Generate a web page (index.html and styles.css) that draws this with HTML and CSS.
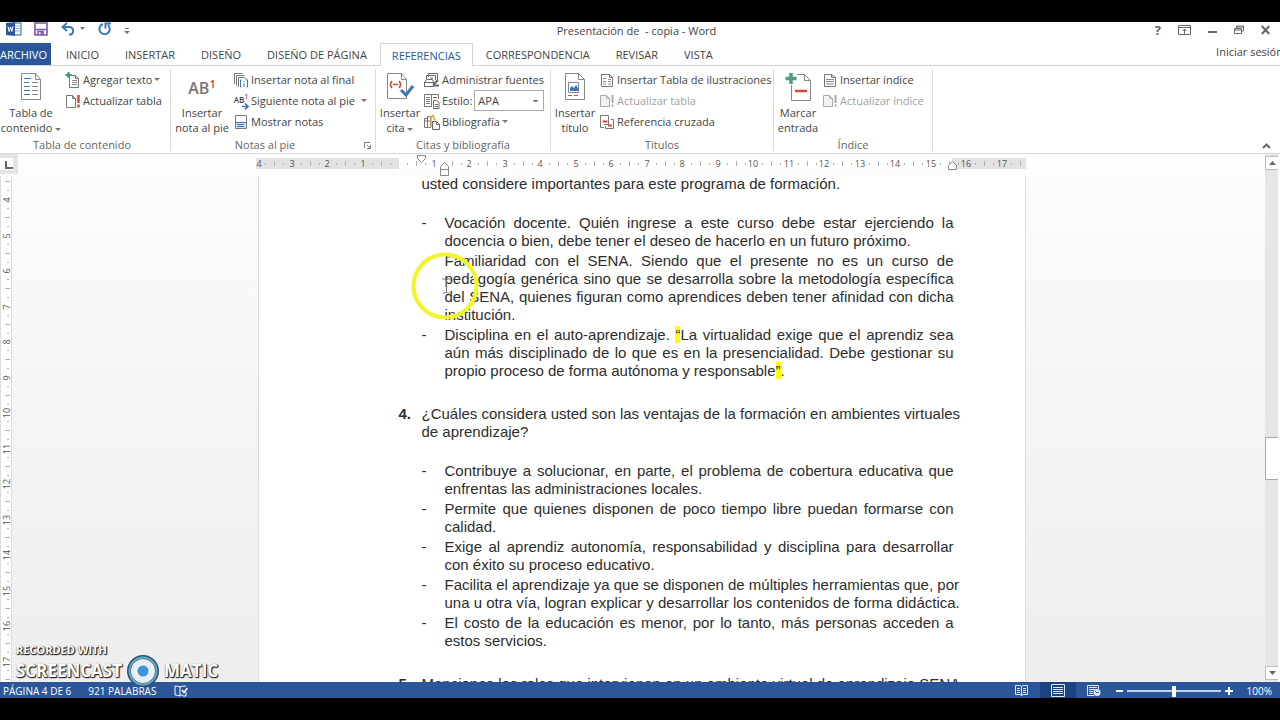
FILE: index.html
```html
<!DOCTYPE html>
<html lang="es">
<head>
<meta charset="utf-8">
<title>Presentación de - copia - Word</title>
<link rel="stylesheet" href="styles.css">
<script src="rulers.js" defer></script>
</head>
<body>
<div class="app">
  <header class="titlebar">
    <div class="quick">
      <svg class="q-word" width="16" height="14" viewBox="0 0 16 14"><path d="M8 1h7v12H8" fill="#fff" stroke="#2b579a"/><path d="M9 4h5M9 6.500h5M9 9h5" stroke="#8ea9cf"/><path d="M0 1l9-1v14l-9-1z" fill="#2b579a"/><path d="M2 4.500l1.200 5L4.500 5l1.300 4.500L7 4.500" fill="none" stroke="#fff"/></svg>
      <button class="q-save" aria-label="Guardar"><svg width="14" height="14" viewBox="0 0 14 14"><path d="M1 1h12v12H1z" fill="#fff" stroke="#8255a8" stroke-width="1.600"/><path d="M1 7.500h12M4 13v-3.500h5V13M7.500 10v3" fill="none" stroke="#8255a8" stroke-width="1.600"/></svg></button>
      <button class="q-undo" aria-label="Deshacer"><svg width="24" height="14" viewBox="0 0 24 14"><path d="M6 1L1.500 5 6 9M2 5h7a4 4 0 0 1 1 7.500H8" fill="none" stroke="#3f76b8" stroke-width="2"/><path d="M19 5h5l-2.500 3z" fill="#777"/></svg></button>
      <button class="q-redo" aria-label="Repetir"><svg width="14" height="14" viewBox="0 0 14 14"><path d="M5 2a5.200 5.200 0 1 0 5 1" fill="none" stroke="#3f76b8" stroke-width="2"/><path d="M7.500 6.500V1.500H13" fill="none" stroke="#3f76b8" stroke-width="2"/></svg></button>
      <button class="q-more" aria-label="Personalizar"><svg width="6" height="8" viewBox="0 0 6 8"><path d="M1 1.500h4" stroke="#777"/><path d="M0 4h6L3 7z" fill="#777"/></svg></button>
    </div>
    <h1 class="title">Presentación de &nbsp;- copia - Word</h1>
    <div class="window">
      <button class="help" aria-label="Ayuda">?</button>
      <button aria-label="Opciones de cinta"><svg width="13" height="10" viewBox="0 0 13 10"><path d="M.5.500h12v9H.5zM.5 2.500h12M6.500 9V4M4.500 6l2-2 2 2" fill="none" stroke="#666"/></svg></button>
      <button aria-label="Minimizar"><svg width="9" height="10" viewBox="0 0 9 10"><path d="M0 7h9" stroke="#666" stroke-width="2"/></svg></button>
      <button aria-label="Restaurar"><svg width="10" height="10" viewBox="0 0 10 10"><path d="M.5 3.500h7v5h-7zM.5 5h7M2.500 3V1h7v5H8M2.500 2h7" fill="none" stroke="#666"/></svg></button>
      <button aria-label="Cerrar"><svg width="9" height="10" viewBox="0 0 9 10"><path d="M.8 1l7.500 8M8.300 1L.8 9" stroke="#666" stroke-width="2"/></svg></button>
    </div>
  </header>

  <nav class="tabs">
    <button class="tab file">ARCHIVO</button>
    <button class="tab">INICIO</button>
    <button class="tab">INSERTAR</button>
    <button class="tab">DISEÑO</button>
    <button class="tab">DISEÑO DE PÁGINA</button>
    <button class="tab active">REFERENCIAS</button>
    <button class="tab">CORRESPONDENCIA</button>
    <button class="tab">REVISAR</button>
    <button class="tab">VISTA</button>
    <a class="signin" href="#">Iniciar sesión</a>
  </nav>

  <div class="ribbon">
    <section class="group g-toc">
      <div class="tools">
        <button class="big"><svg width="20" height="27" viewBox="0 0 20 27"><path d="M.5.500h14l5 6v20H.5zM14.500.500v6h5" fill="#fff" stroke="#888"/><path d="M3 5.500h7M3 9.500h5M3 13.500h6M3 17.500h6M3 21.500h6" stroke="#3f76b8"/><path d="M11 9.500h6M11 13.500h6M11 17.500h6M11 21.500h6" stroke="#888"/></svg><span>Tabla de<br>contenido <i class="arrow"></i></span></button>
        <div class="stack">
          <button class="cmd"><svg width="16" height="16" viewBox="0 0 16 16"><path d="M4.500 4.500v11h9v-9l-3-3h-5M10.500 3.500v3h3" fill="none" stroke="#777"/><path d="M7 8.500h5M7 10.500h5M7 12.500h5" stroke="#888"/><path d="M3.500 0v6M.5 3h6" stroke="#3d9275" stroke-width="2"/></svg>Agregar texto <i class="arrow"></i></button>
          <button class="cmd"><svg width="16" height="16" viewBox="0 0 16 16"><path d="M1.500 2.500h6l3 3v9h-9zM7.500 2.500v3h3" fill="#fff" stroke="#777"/><path d="M13.500 2v8M13.500 11.500v3" stroke="#d24a35" stroke-width="2.400"/></svg>Actualizar tabla</button>
        </div>
      </div>
      <footer>Tabla de contenido</footer>
    </section>

    <section class="group g-notes">
      <div class="tools">
        <button class="big"><b class="ab">AB<sup>1</sup></b><span>Insertar<br>nota al pie</span></button>
        <div class="stack">
          <button class="cmd"><svg width="16" height="16" viewBox="0 0 16 16"><path d="M1.500 12V1.500h8M3.500 13.500v-10h8M5.500 15V5.500h6l3 3" fill="none" stroke="#777"/><path d="M8.500 8h-1v7h1M13.500 8h1v7h-1M11 9v1M11 11v4" fill="none" stroke="#3f76b8"/></svg>Insertar nota al final</button>
          <button class="cmd wide"><span class="miniab">AB<sup>1</sup><svg width="7" height="7" viewBox="0 0 7 7"><path d="M0 3.500h5M3 .500l3 3-3 3" fill="none" stroke="#3f76b8" stroke-width="1.600"/></svg></span>Siguiente nota al pie <i class="arrow"></i></button>
          <button class="cmd"><svg width="16" height="16" viewBox="0 0 16 16"><path d="M2.500 1.500h11v13h-11z" fill="#fff" stroke="#777"/><path d="M3 8h10v6H3z" fill="#d3e2f3"/><path d="M2.500 8.500h11M4 10.500h7M4 12.500h7" stroke="#3f76b8"/></svg>Mostrar notas</button>
        </div>
      </div>
      <footer>Notas al pie</footer>
      <button class="launcher" aria-label="Más opciones de notas"><svg width="7" height="7" viewBox="0 0 7 7"><path d="M.5 6V.500H6M3 3l3 3M6.500 3v3.500H3" fill="none" stroke="#777"/></svg></button>
    </section>

    <section class="group g-cite">
      <div class="tools">
        <button class="big"><svg width="28" height="27" viewBox="0 0 28 27"><path d="M1.500.500h14l5 6v19h-19zM15.500.500v6h5" fill="#fff" stroke="#888"/><path d="M6 8q-3 3.500 0 7M13 8q3 3.500 0 7M7 11.500h5" fill="none" stroke="#d24a35" stroke-width="1.600"/><path d="M15 17l5 5 7-9" fill="none" stroke="#3f76b8" stroke-width="3"/></svg><span>Insertar<br>cita <i class="arrow"></i></span></button>
        <div class="stack">
          <button class="cmd"><svg width="16" height="16" viewBox="0 0 16 16"><path d="M4.500 5V1.500h9V8M2.500 7V3.500h9V8M6 6h3M.5 14.500v-4l2-3h6l1 3M.5 10.500h9v4h-9z" fill="none" stroke="#666"/><path d="M9 13l5-5M9 13.500h6" stroke="#666" stroke-width="2"/></svg>Administrar fuentes</button>
          <div class="cmd"><svg width="16" height="16" viewBox="0 0 16 16"><path d="M8 13.500H.5v-12h14V6M7.500 1.500v12" fill="none" stroke="#777"/><path d="M2 4.500h4M2 6.500h4M2 8.500h4M2 10.500h4M9 4.500h4" stroke="#777"/><path d="M9.500 7.500h3l2.500 2v6H9.500z" fill="#fff" stroke="#666"/><path d="M11 11.500h3M11 13.500h3" stroke="#3f76b8"/></svg><label for="style">Estilo:</label><select id="style"><option>APA</option></select></div>
          <button class="cmd"><svg width="16" height="16" viewBox="0 0 16 16"><path d="M.5 4.500h3v9h-3zM3.500 2.500h3v11h-3zM.5 7h6" fill="#fff" stroke="#777"/><path d="M7 3l2-1.500 2 5M7 3v10" fill="none" stroke="#e0a640" stroke-width="1.600"/><path d="M8.500 7.500h4l3 3v5h-7zM12.500 7.500v3h3" fill="#fff" stroke="#666"/></svg>Bibliografía <i class="arrow"></i></button>
        </div>
      </div>
      <footer>Citas y bibliografía</footer>
    </section>

    <section class="group g-titles">
      <div class="tools">
        <button class="big"><svg width="20" height="27" viewBox="0 0 20 27"><path d="M.5.500h13l6 6v20H.5zM13.500.500v6h6" fill="#fff" stroke="#888"/><path d="M3.500 9.500h10v10h-10z" fill="#fff" stroke="#888"/><path d="M5 18v-3l2-2 2 2 2-3 2 3v3z" fill="#3f76b8"/><path d="M3 22.500h4M9 22.500h4" stroke="#d24a35"/></svg><span>Insertar<br>título</span></button>
        <div class="stack">
          <button class="cmd"><svg width="16" height="16" viewBox="0 0 16 16"><path d="M2.500 2.500h8l3 3v9h-11zM10.500 2.500v3h3" fill="#fff" stroke="#777"/><path d="M4 6.500h3M4 9.500h3M4 12h3M9 7.500h3M9 9.500h3M9 12h3" stroke="#888"/></svg>Insertar Tabla de ilustraciones</button>
          <button class="cmd" disabled><svg width="16" height="16" viewBox="0 0 16 16"><path d="M1.500 2.500h6l3 3v8h-9zM7.500 2.500v3h3" fill="#f2f2f2" stroke="#aaa"/><path d="M13.500 2v8M13.500 11.500v2" stroke="#aaa" stroke-width="2"/></svg>Actualizar tabla</button>
          <button class="cmd"><svg width="16" height="16" viewBox="0 0 16 16"><path d="M5 13.500H1.500v-12h8v9H5M12 5.500h2.500v9h-8V12" fill="none" stroke="#777"/><path d="M3.500 7.500h5M9 11.500h4" stroke="#d24a35" stroke-width="1.800"/></svg>Referencia cruzada</button>
        </div>
      </div>
      <footer>Títulos</footer>
    </section>

    <section class="group g-index">
      <div class="tools">
        <button class="big"><svg width="26" height="28" viewBox="0 0 26 28"><path d="M6.500 12v15.500h19v-20l-6-6H12M19.500 1.500v6h6" fill="none" stroke="#888"/><path d="M10 18h12" stroke="#d24a35" stroke-width="2.500"/><path d="M6 0v11M.5 5.500h11" stroke="#4f9c82" stroke-width="3.500"/></svg><span>Marcar<br>entrada</span></button>
        <div class="stack">
          <button class="cmd"><svg width="16" height="16" viewBox="0 0 16 16"><path d="M2.500 2.500h7l4 3v9h-11zM9.500 2.500v3h4" fill="#fff" stroke="#777"/><path d="M4 7.500h8M4 9.500h8M4 12h8" stroke="#888"/></svg>Insertar índice</button>
          <button class="cmd" disabled><svg width="16" height="16" viewBox="0 0 16 16"><path d="M1.500 2.500h6l3 3v8h-9zM7.500 2.500v3h3" fill="#f2f2f2" stroke="#aaa"/><path d="M13.500 2v8M13.500 11.500v2" stroke="#aaa" stroke-width="2"/></svg>Actualizar índice</button>
        </div>
      </div>
      <footer>Índice</footer>
    </section>
    <button class="collapse" aria-label="Contraer la cinta"><svg width="9" height="6" viewBox="0 0 9 6"><path d="M1 5l3.500-3.500L8 5" fill="none" stroke="#666" stroke-width="2"/></svg></button>
  </div>

  <main class="workspace">
    <div class="corner"><span></span></div>
    <div class="hruler">
      <div class="track" id="hruler"></div>
    </div>
    <div class="vruler" id="vruler"></div>
    <div class="canvas">
      <article class="page">
        <p class="lead">usted considere importantes para este programa de formación.</p>
        <ul>
          <li><span>Vocación docente. Quién ingrese a este curso debe estar ejerciendo la</span><span>docencia o bien, debe tener el deseo de hacerlo en un futuro próximo.</span></li>
          <li><span>Familiaridad con el SENA. Siendo que el presente no es un curso de</span><span>pedagogía genérica sino que se desarrolla sobre la metodología específica</span><span>del SENA, quienes figuran como aprendices deben tener afinidad con dicha</span><span>institución.</span></li>
          <li><span>Disciplina en el auto-aprendizaje. <mark>“</mark>La virtualidad exige que el aprendiz sea</span><span>aún más disciplinado de lo que es en la presencialidad. Debe gestionar su</span><span>propio proceso de forma autónoma y responsable<mark>”</mark>.</span></li>
        </ul>
        <div class="question"><b>4.</b><p><span>¿Cuáles considera usted son las ventajas de la formación en ambientes virtuales</span><span>de aprendizaje?</span></p></div>
        <ul>
          <li><span>Contribuye a solucionar, en parte, el problema de cobertura educativa que</span><span>enfrentas las administraciones locales.</span></li>
          <li><span>Permite que quienes disponen de poco tiempo libre puedan formarse con</span><span>calidad.</span></li>
          <li><span>Exige al aprendiz autonomía, responsabilidad y disciplina para desarrollar</span><span>con éxito su proceso educativo.</span></li>
          <li class="full"><span>Facilita el aprendizaje ya que se disponen de múltiples herramientas que, por</span><span>una u otra vía, logran explicar y desarrollar los contenidos de forma didáctica.</span></li>
          <li><span>El costo de la educación es menor, por lo tanto, más personas acceden a</span><span>estos servicios.</span></li>
        </ul>
        <div class="question full"><b>5.</b><p><span>Menciones los roles que intervienen en un ambiente virtual de aprendizaje SENA</span></p></div>
        <svg class="pointer" width="68" height="68" viewBox="0 0 68 68"><circle cx="34" cy="34" r="31.500" fill="none" stroke="#f3f52b" stroke-width="4"/><path d="M31 27h3l1.500 1 1.500-1h3M35.500 28v12M32 41h2.500l1-1 1 1h2" fill="none" stroke="#777"/></svg>
      </article>
    </div>
    <div class="scrollbar">
      <button aria-label="Subir"><svg width="7" height="4" viewBox="0 0 7 4"><path d="M0 4h7L3.500 0z" fill="#666"/></svg></button>
      <div class="rail"><div class="above"></div><div class="thumb"></div><div class="below"></div></div>
      <button aria-label="Bajar"><svg width="7" height="4" viewBox="0 0 7 4"><path d="M0 0h7L3.500 4z" fill="#666"/></svg></button>
    </div>
    <div class="watermark">
      <small>RECORDED WITH</small>
      <div>SCREENCAST<svg width="34" height="34" viewBox="0 0 34 34"><circle cx="17" cy="17" r="14" fill="#e8eef2" stroke="#26546f" stroke-width="4"/><circle cx="17" cy="17" r="13.500" fill="none" stroke="#69a7cb" stroke-width="2"/><circle cx="17" cy="17" r="5.500" fill="#3d96d2"/></svg>MATIC</div>
    </div>
  </main>

  <footer class="status">
    <span class="pages">PÁGINA 4 DE 6</span>
    <span class="words">921 PALABRAS</span>
    <svg width="14" height="13" viewBox="0 0 14 13"><path d="M6 2q-2-1-5-1v9q3 0 5 1 1-1 3-1M6 2v9M6 2q2-1 6-1M12 7v4H9" fill="none" stroke="#fff"/><path d="M8 5l2 2.500L13.500 3" fill="none" stroke="#fff" stroke-width="1.500"/></svg>
    <div class="views">
      <button aria-label="Modo de lectura"><svg width="13" height="12" viewBox="0 0 13 12"><path d="M.5 1.500h4.500l1.500 1 1.500-1h4.500v9H8l-1.500 1-1.500-1H.5zM6.500 2.500v9M2 4.500h3M2 6.500h3M2 8.500h3M8 4.500h3M8 6.500h3M8 8.500h3" fill="none" stroke="#dfe8f5"/></svg></button>
      <button class="on" aria-label="Diseño de impresión"><svg width="14" height="13" viewBox="0 0 14 13"><path d="M.5.500h13v12H.5zM2 3.500h10M2 5.500h10M2 7.500h10M2 9.500h10" fill="none" stroke="#dfe8f5"/></svg></button>
      <button aria-label="Diseño web"><svg width="14" height="13" viewBox="0 0 14 13"><path d="M7 11.500H.5V1.500h11V5M2 3.500h8M2 5.500h6M2 7.500h4M2 9.500h4" fill="none" stroke="#dfe8f5"/><circle cx="10" cy="8.500" r="3.500" fill="#dfe8f5"/><path d="M8 7l2 2 2-1" fill="none" stroke="#2b579a"/></svg></button>
    </div>
    <button class="zoomer" aria-label="Alejar"><svg width="7" height="8" viewBox="0 0 7 8"><path d="M0 4h7" stroke="#fff" stroke-width="2"/></svg></button>
    <input type="range" aria-label="Zoom" min="0" max="200" value="100">
    <button class="zoomer" aria-label="Acercar"><svg width="8" height="8" viewBox="0 0 8 8"><path d="M0 4h8M4 0v8" stroke="#fff" stroke-width="2"/></svg></button>
    <span class="percent">100%</span>
  </footer>
</div>
</body>
</html>
```
FILE: styles.css
```css
* { box-sizing: border-box; }
body {
  margin: 0;
  background: #000;
  color: #444;
  font: 11px/15px "Open Sans", "Noto Sans", sans-serif;
}
button, select { font: inherit; color: inherit; border: 0; background: none; padding: 0; margin: 0; white-space: nowrap; }
svg { display: block; flex: none; }
.app {
  height: 100vh;
  padding: 22px 0;
  display: flex;
  flex-direction: column;
  overflow: hidden;
}

/* Title bar */
.titlebar { background: #fff; height: 21px; display: grid; grid-template-columns: 1fr auto 1fr; flex: none; }
.quick { display: flex; align-items: flex-start; padding-left: 6px; }
.q-save { margin-left: 12px; }
.q-undo { margin-left: 13px; }
.q-redo { margin-left: 13px; }
.q-more { margin: 5px 0 0 12px; }
.title { margin: 0 7px 0 0; font-size: 11px; line-height: 18px; font-weight: 400; }
.window { display: flex; justify-content: flex-end; align-items: flex-start; gap: 17px; padding: 3px 10px 0 0; }
.help { font-size: 13px; line-height: 10px; font-weight: 700; color: #666; }

/* Tabs */
.tabs { background: #fff; height: 23px; display: flex; flex: none; border-bottom: 1px solid #d4d4d4; }
.tab { padding: 0 13px; height: 22px; }
.file { background: #2b579a; color: #fff; padding: 0 4px 0 0; margin-right: 2px; }
.active { color: #2b579a; background: #fff; border: 1px solid #d4d4d4; border-bottom: 0; padding: 0 11px; height: 23px; }
.signin { margin: 0 -3px 0 auto; color: #444; text-decoration: none; line-height: 18px; }

/* Ribbon */
.ribbon { background: #fff; height: 88px; display: flex; flex: none; border-bottom: 1px solid #d8d8d8; position: relative; }
.group { position: relative; margin: 3px 0 2px; border-right: 1px solid #dcdcdc; display: flex; flex-direction: column; flex: none; }
.g-toc { width: 171px; }
.g-notes { width: 205px; }
.g-cite { width: 175px; }
.g-titles { width: 223px; }
.g-index { width: 159px; }
.tools { display: flex; align-items: flex-start; height: 70px; flex: none; }
.big { width: 48px; height: 66px; display: flex; flex-direction: column; align-items: center; justify-content: space-between; padding-top: 4px; flex: none; }
.g-toc .big, .g-notes .big { width: 62px; }
.stack { display: flex; flex-direction: column; }
.cmd { height: 21px; display: flex; align-items: center; gap: 2px; }
.cmd:disabled { color: #a0a0a0; }
.g-toc .stack { padding-left: 3px; }
.group footer { text-align: center; line-height: 12px; color: #666; }
.g-toc footer { padding-right: 6px; }
.g-notes footer { padding-right: 16px; }
.arrow { display: inline-block; border: 3px solid transparent; border-top-color: #777; border-bottom: 0; vertical-align: middle; }
.wide .arrow { margin-left: 4px; }
.ab { font-size: 16px; line-height: 30px; font-weight: 600; color: #777; }
.ab sup { color: #d24a35; font-size: 11px; line-height: 0; font-weight: 600; }
.miniab { position: relative; width: 16px; font-size: 8px; line-height: 16px; height: 18px; font-weight: 600; }
.miniab sup { color: #d24a35; font-size: 7px; line-height: 0; }
.miniab svg { position: absolute; right: 0; bottom: 0; }
.launcher { position: absolute; right: 4px; bottom: 2px; }
.collapse { position: absolute; right: 9px; bottom: 4px; }
.cmd select {
  appearance: none;
  width: 70px;
  height: 21px;
  padding: 0 3px;
  border: 1px solid #ababab;
  border-radius: 0;
  background: linear-gradient(#777, #777) right 6px top 9px / 3px 2px no-repeat, linear-gradient(#777, #777) right 5px top 9px / 5px 1px no-repeat, #fff;
}

/* Document area */
.workspace {
  position: relative;
  flex: 1;
  min-height: 0;
  display: grid;
  grid-template: 22px minmax(0, 1fr) / 18px minmax(0, 1fr) 15px;
  background: linear-gradient(#fdfdfd, #f4f4f4 50%, #eee);
}
.corner { background: #e4e4e4; height: 20px; padding: 4px 5px 4px 0; }
.corner span { display: block; height: 12px; background: #fff; position: relative; }
.corner span::after { content: ""; position: absolute; left: 5px; top: 3px; width: 6px; height: 6px; border: solid #666; border-width: 0 0 2px 2px; }
.hruler { display: flex; justify-content: center; padding-top: 1px; }
.track { width: 770px; flex: none; margin-right: 2px; }
.vruler { overflow: hidden; }
.vruler svg text, .track svg text { font-size: 9px; fill: #555; text-anchor: middle; }
.canvas { display: flex; justify-content: center; overflow: hidden; }
.page {
  position: relative;
  width: 766px;
  flex: none;
  background: #fff;
  box-shadow: 0 0 0 1px #dcdcdc;
  padding: 0 71px 0 140px;
  color: #2d2d2d;
  font: 15px/18px "Liberation Sans", Arial, sans-serif;
}
.page p { margin: 0; }
.page span { display: block; white-space: nowrap; text-align-last: justify; }
.page span:last-child { text-align-last: left; }
.page .full span { text-align-last: justify; }
.page mark { background: #ff0; color: inherit; }
.page .lead { padding-left: 23px; margin-top: -1px; }
.page ul { list-style: none; margin: 21px 0 25px; padding: 0 0 0 46px; }
.page li { position: relative; margin-bottom: 2px; }
.page li::before { content: "-"; position: absolute; left: -23px; }
.question { display: flex; }
.question b { width: 23px; flex: none; }
.question p { flex: 1; }
.pointer { position: absolute; left: 152px; top: 76px; }
.scrollbar { grid-area: 1 / 3 / 3 / 4; background: #e6e6e6; border-right: 2px solid #fff; display: flex; flex-direction: column; padding: 2px 0; }
.scrollbar button { height: 14px; background: #fff; border: 1px solid #bbb; border-right: 0; display: grid; place-items: center; flex: none; }
.rail { flex: 1; display: flex; flex-direction: column; }
.above { flex: 268; }
.thumb { flex: 41; background: #fff; border: 1px solid #aaa; border-right: 0; }
.below { flex: 187; }
.watermark {
  position: absolute;
  left: 16px;
  bottom: -6px;
  z-index: 2;
  color: #fff;
  font: 700 17px/34px "Open Sans", sans-serif;
  text-shadow: 1px 1px 1px #222, 0 1px 1px #444, 1px 0 1px #555;
}
.watermark small { display: block; font-size: 11px; line-height: 12px; margin-bottom: -2px; }
.watermark div { display: flex; align-items: center; gap: 4px; }

/* Status bar */
.status { height: 16px; background: #2b579a; color: #fff; display: flex; align-items: center; flex: none; font-size: 10px; line-height: 16px; padding: 2px 8px 0 3px; }
.words { margin: 0 18px 0 17px; }
.views { display: flex; margin-left: auto; margin-top: -2px; }
.views button { width: 36px; height: 16px; display: grid; place-items: center; }
.views .on { background: #1b4381; }
.zoomer { flex: none; margin: 0 4px; }
.status input { appearance: none; width: 94px; height: 12px; margin: 0; background: linear-gradient(#c5d3e8, #c5d3e8) center / 100% 2px no-repeat; }
.status input::-webkit-slider-thumb { appearance: none; width: 4px; height: 11px; background: #fff; }
.percent { margin-left: 10px; }
```
FILE: rulers.js
```js
const unit = 35.5;

function horizontalRuler() {
  const zero = 142;
  let s = '<svg width="770" height="22" viewBox="0 0 770 22">' +
    '<path d="M0 3h770v11H0z" fill="#e2e2e2"/><path d="M143 3h553v11H143z" fill="#fff"/>';
  for (let n = -4; n <= 17; n++) {
    const x = Math.round(zero + n * unit);
    if (n) s += `<text x="${Math.max(x, 3)}" y="12">${Math.abs(n)}</text>`;
    s += `<path d="M${x + 9.5} 8v2M${x + 18.5} 6v5M${x + 27.5} 8v2" stroke="#b0b0b0"/>`;
  }
  s += '<path d="M161.500.500h8v3l-4 4-4-4z" fill="#fff" stroke="#888"/>' +
    '<path d="M184.500 20.500v-9l4-4 4 4v9zM184.500 14.500h8" fill="#fff" stroke="#888"/>' +
    '<path d="M692.500 14.500v-4l4-4 4 4v4z" fill="#fff" stroke="#888"/></svg>';
  document.getElementById('hruler').innerHTML = s;
}

function verticalRuler() {
  let s = '<svg width="18" height="506" viewBox="0 0 18 506"><path d="M1 0h10v506H1z" fill="#fff"/><path d="M.5 0v506M11.500 0v506" stroke="#ddd"/><path d="M5 5.500h5M7 14.500h2" stroke="#b0b0b0"/>';
  for (let n = 4; n <= 17; n++) {
    const y = Math.round(24 + (n - 4) * unit);
    s += `<text transform="translate(10 ${y}) rotate(-90)">${n}</text>`;
    s += `<path d="M7 ${y + 8.5}h2M5 ${y + 17.5}h5M7 ${y + 26.5}h2" stroke="#b0b0b0"/>`;
  }
  document.getElementById('vruler').innerHTML = s + '</svg>';
}

horizontalRuler();
verticalRuler();
```
